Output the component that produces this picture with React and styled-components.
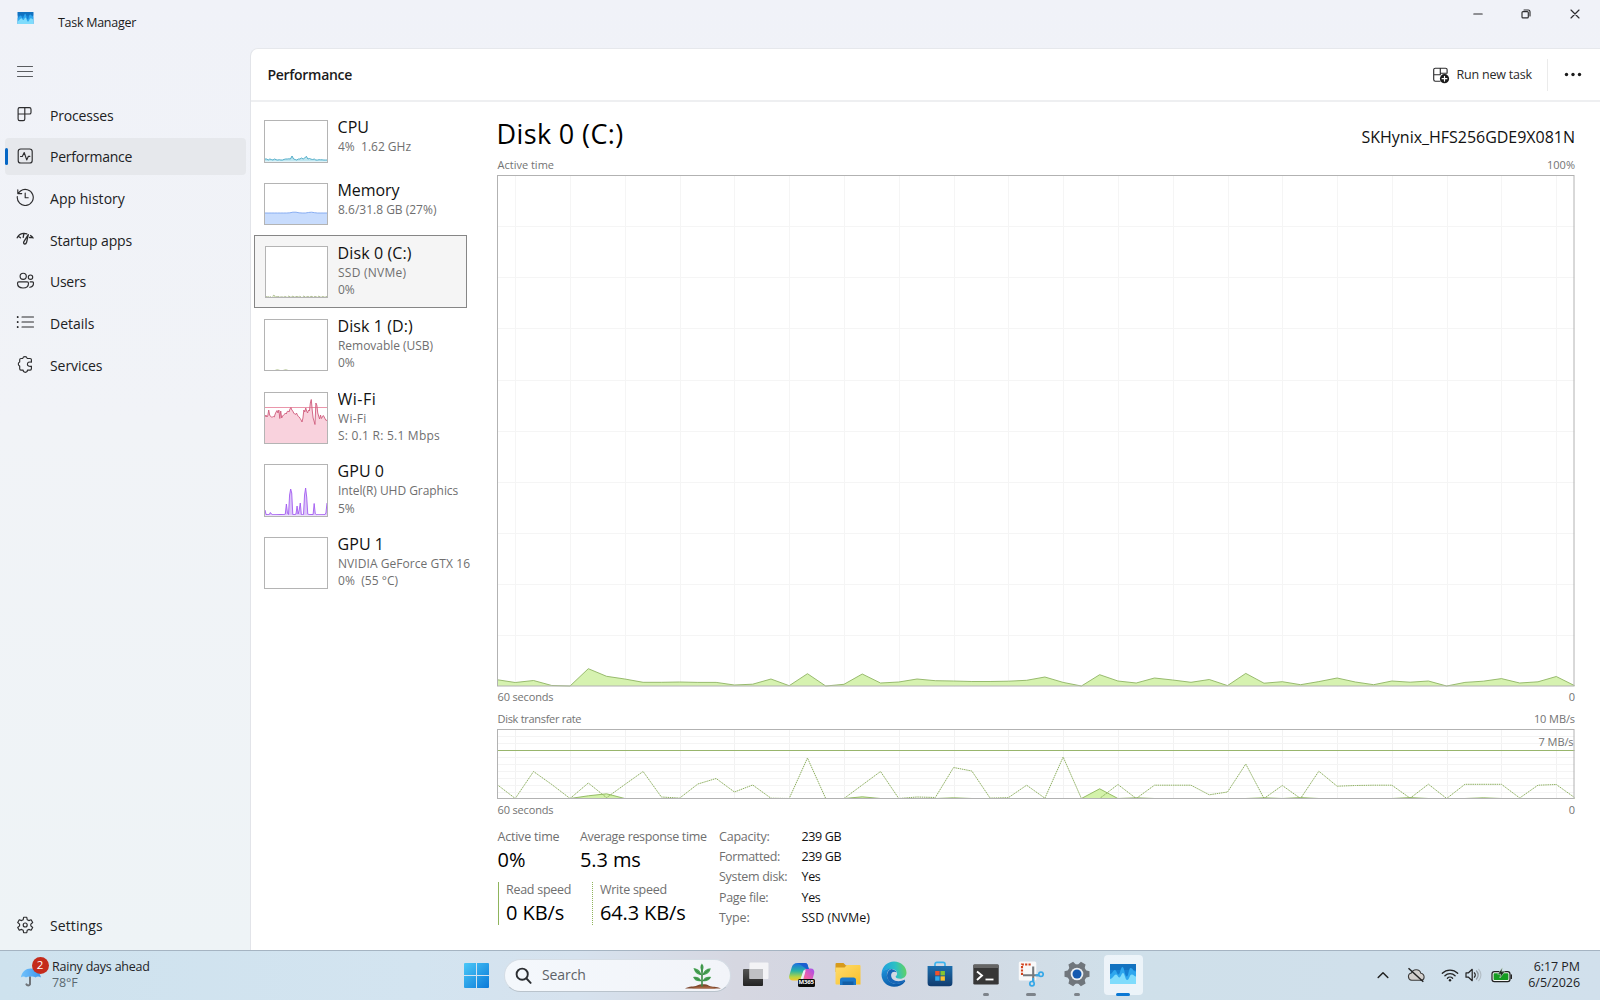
import React from "react";
import styled, { createGlobalStyle } from "styled-components";

const GlobalStyle = createGlobalStyle`
  * { box-sizing: border-box; }
  html, body { margin: 0; padding: 0; }
  body {
    font-family: "Open Sans", "Noto Sans", sans-serif;
    color: #1b1b1b;
    overflow: hidden;
  }
  svg { display: block; flex: none; }
`;

/* ---------- shell ---------- */
const Desktop = styled.div`
  width: 1600px;
  height: 1000px;
  display: grid;
  grid-template-rows: 950px 50px;
  overflow: hidden;
`;

const Window = styled.div`
  display: grid;
  grid-template-rows: 48px 902px;
  background: linear-gradient(180deg, #f0f2f8 0%, #f1f3f7 45%, #eef3f6 100%);
`;

const TitleBar = styled.header`
  display: flex;
  align-items: flex-start;
`;

const AppBadge = styled.div`
  padding: 12px 0 0 16.5px;
  width: 58px;
`;

const AppTitle = styled.div`
  padding-top: 13px;
  font-size: 12.5px;
  line-height: 20px;
  letter-spacing: -0.28px;
`;

const WindowButtons = styled.div`
  margin-left: auto;
  margin-right: 1px;
  display: flex;
`;

const WindowButton = styled.div`
  width: 48.5px;
  height: 28px;
  display: flex;
  align-items: center;
  justify-content: center;
`;

const Body = styled.div`
  display: grid;
  grid-template-columns: 250px 1350px;
`;

/* ---------- sidebar ---------- */
const Sidebar = styled.nav`
  display: flex;
  flex-direction: column;
  padding: 0 4px 2px 5px;
`;

const MenuButton = styled.div`
  height: 48px;
  padding: 0 0 0 11px;
  display: flex;
  align-items: center;
`;

const NavItem = styled.div`
  position: relative;
  height: 37.4px;
  margin-bottom: 4.25px;
  padding: 2px 0 0 11px;
  display: grid;
  grid-template-columns: 34px 1fr;
  align-items: center;
  border-radius: 4px;
  background: ${(p) => (p.$active ? "#e6e8ec" : "transparent")};
  font-size: 14px;
  line-height: 20px;
  letter-spacing: ${(p) => p.$ls || 0}px;
  color: #202123;
  svg { margin-top: -3px; }
`;

const ActiveMark = styled.span`
  position: absolute;
  left: -0.5px;
  top: 10.5px;
  width: 3px;
  height: 16.5px;
  border-radius: 2px;
  background: #0667c5;
`;

const NavSpacer = styled.div`
  flex: 1;
`;

/* ---------- content ---------- */
const Content = styled.main`
  background: #fff;
  border-left: 1px solid #e2e4e9;
  border-top: 1px solid #e6e8ec;
  border-top-left-radius: 8px;
  display: grid;
  grid-template-rows: 53px 1fr;
`;

const ContentHeader = styled.div`
  display: flex;
  align-items: center;
  border-bottom: 2px solid #eeeff1;
  padding-left: 16.5px;
`;

const PageTitle = styled.h1`
  margin: 0;
  padding-top: 1px;
  font-size: 14px;
  line-height: 20px;
  font-weight: 600;
  letter-spacing: -0.3px;
`;

const RunTask = styled.div`
  margin-left: auto;
  display: flex;
  align-items: center;
  gap: 7px;
  padding-right: 15px;
  font-size: 12.5px;
  line-height: 20px;
  letter-spacing: -0.2px;
  color: #2a2a2a;
`;

const HeaderDivider = styled.div`
  width: 1px;
  height: 32px;
  background: #ebebeb;
`;

const MoreButton = styled.div`
  width: 52px;
  padding-right: 2px;
  display: flex;
  justify-content: center;
`;

const Panes = styled.div`
  display: grid;
  grid-template-columns: 219px 1130px;
`;

/* ---------- resource list ---------- */
const ResourceList = styled.div`
  padding: 8px 0 0 3px;
`;

const Resource = styled.div`
  height: ${(p) => (p.$tall ? 72.6 : 62.8)}px;
  width: 217px;
  display: grid;
  grid-template-columns: 73.5px 1fr;
  padding: 10px 0 0 10px;
  ${(p) =>
    p.$selected &&
    `
    width: 213px;
    height: 73px;
    margin-top: -1px;
    margin-bottom: 1.4px;
    padding-top: 11px;
    background: #f5f5f5;
    box-shadow: inset 0 0 0 1px #868686;
  `}
`;

const Thumb = styled.div`
  width: ${(p) => (p.$selected ? 63 : 64)}px;
  height: ${(p) => (p.$tall ? 52.5 : 42.5)}px;
  margin-left: ${(p) => (p.$selected ? 0.5 : 0)}px;
  border: 1px solid #b4b4b4;
  background: #fff;
  overflow: hidden;
`;

const ResourceText = styled.div`
  min-width: 0;
  overflow: hidden;
  margin-top: -4px;
`;

const ResourceName = styled.div`
  font-size: 16px;
  line-height: 22px;
  letter-spacing: ${(p) => p.$ls || 0}px;
  color: #111;
  white-space: pre;
`;

const ResourceMeta = styled.div`
  font-size: 12px;
  line-height: 17.4px;
  padding-left: 0.5px;
  letter-spacing: ${(p) => p.$ls || 0}px;
  color: #6f6f6f;
  white-space: pre;
`;

/* ---------- details pane ---------- */
const Detail = styled.section`
  padding: 12px 25px 0 27.5px;
  display: flex;
  flex-direction: column;
`;

const SplitRow = styled.div`
  display: flex;
  justify-content: space-between;
  align-items: flex-end;
  height: ${(p) => p.$h}px;
`;

const DiskTitle = styled.h2`
  margin: 0;
  font-weight: 400;
  font-size: 27px;
  line-height: 40px;
  letter-spacing: 0.38px;
  margin-left: -1px;
  color: #000;
`;

const DiskModel = styled.div`
  font-size: 16px;
  line-height: 33px;
  letter-spacing: -0.02px;
  color: #111;
`;

const Caption = styled.div`
  font-size: 11px;
  line-height: 20px;
  letter-spacing: ${(p) => p.$ls || 0}px;
  color: #737373;
`;

const ChartLayer = styled.div`
  position: relative;
  margin-left: -0.5px;
  height: ${(p) => p.$h}px;
`;

const ScaleTag = styled.div`
  position: absolute;
  right: 1.5px;
  top: 3px;
  font-size: 11px;
  line-height: 20px;
  letter-spacing: -0.09px;
  color: #737373;
`;

const Stats = styled.div`
  display: grid;
  grid-template-columns: 221.5px 82.5px 1fr;
  padding-top: 7px;
`;

const StatGrid = styled.div`
  display: flex;
  flex-direction: column;
`;

const StatRow = styled.div`
  display: grid;
  grid-template-columns: ${(p) => p.$cols};
  height: ${(p) => p.$h}px;
`;

const Stat = styled.div`
  padding-left: ${(p) => (p.$bar ? 7.5 : 0)}px;
  border-left: ${(p) => (p.$bar ? `1.5px ${p.$bar} #8fb45c` : "none")};
  height: ${(p) => (p.$bar ? 43.5 : 46)}px;
`;

const StatLabel = styled.div`
  font-size: 12.5px;
  line-height: 20px;
  margin-top: ${(p) => p.$mt || 0}px;
  letter-spacing: ${(p) => p.$ls || 0}px;
  color: #6f6f6f;
  white-space: nowrap;
`;

const StatValue = styled.div`
  font-size: 20px;
  line-height: 26px;
  letter-spacing: ${(p) => p.$ls || 0}px;
  color: #000;
  white-space: nowrap;
`;

const InfoColumn = styled.div`
  display: flex;
  flex-direction: column;
`;

const InfoText = styled.div`
  font-size: 12.5px;
  line-height: 20.4px;
  letter-spacing: ${(p) => p.$ls || 0}px;
  color: ${(p) => (p.$dark ? "#111" : "#6f6f6f")};
  white-space: nowrap;
`;

/* ---------- taskbar ---------- */
const Taskbar = styled.footer`
  display: grid;
  grid-template-columns: 463px 692px 1fr;
  border-top: 1px solid #a5b4c2;
  background: linear-gradient(90deg, #cee2ee 0%, #d3e4f0 26%, #d6e2ee 36%, #d6d7e1 46%, #d3d6e2 52%, #d2dae4 60%, #cfe0ea 71%, #d1e0ec 100%);
`;

const WeatherWidget = styled.div`
  display: flex;
  padding: 5.5px 0 0 20px;
`;

const WeatherIcon = styled.div`
  position: relative;
  width: 32px;
  padding-top: 10px;
`;

const WeatherText = styled.div`
  padding-top: 2px;
`;

const AlertBadge = styled.span`
  position: absolute;
  left: 11.5px;
  top: 0;
  width: 17px;
  height: 17px;
  border-radius: 50%;
  background: #c42b1c;
  color: #fff;
  font-size: 11.5px;
  line-height: 16.5px;
  text-align: center;
`;

const TaskText = styled.div`
  font-size: 12.5px;
  line-height: 16.7px;
  letter-spacing: ${(p) => p.$ls || 0}px;
  color: ${(p) => p.$color || "#1f2427"};
  white-space: nowrap;
`;

const TaskIcons = styled.div`
  display: flex;
  align-items: flex-start;
`;

const StartButton = styled.div`
  width: 40.5px;
  padding: 12px 0 0 1px;
`;

const SearchBox = styled.div`
  width: 227.5px;
  height: 32.5px;
  margin-top: 8px;
  border-radius: 17px;
  background: linear-gradient(90deg, #f4f8fc, #f2f4f9);
  border: 1px solid #d5dde5;
  border-bottom-color: #b9c3cc;
  display: flex;
  align-items: center;
  padding: 0 8px 0 10px;
  font-size: 14px;
  line-height: 20px;
  letter-spacing: -0.1px;
  color: #5d6267;
  svg:first-child { margin-right: 10.5px; }
  svg:last-child { margin-left: auto; }
`;

const AppStrip = styled.div`
  display: flex;
  padding-left: 2px;
`;

const AppButton = styled.div`
  width: 39px;
  height: 40px;
  margin: 4px 3px 0 3.85px;
  border-radius: 4px;
  display: grid;
  grid-template-rows: 36px 4px;
  justify-items: center;
  align-items: center;
  padding-top: 1px;
  background: ${(p) => (p.$active ? "rgba(240,246,250,.88)" : "transparent")};
`;

const RunMark = styled.span`
  width: ${(p) => p.$w}px;
  height: 3px;
  border-radius: 2px;
  background: ${(p) => p.$color || "#7d838a"};
`;

const Tray = styled.div`
  display: flex;
  align-items: flex-start;
  justify-content: flex-end;
  padding: 5.5px 20px 0 0;
`;

const TrayIcon = styled.div`
  height: 37px;
  margin-right: ${(p) => p.$gap || 0}px;
  display: flex;
  align-items: center;
`;

const Clock = styled.div`
  text-align: right;
  width: 52px;
  padding-top: 2px;
`;

/* ---------- charts ---------- */
const STEPS = 59;
const ACTIVE = [6.3, 3.5, 5.5, 0.5, 0, 17.3, 9.7, 7, 3.7, 3.7, 4, 3.6, 3.6, 1, 1.8, 7, 0.3, 12.3, 0, 1.7, 12, 3, 4, 7, 5.3, 5, 4.5, 4.5, 4.8, 5.7, 9, 3.6, 0, 11.3, 5, 3, 8, 6, 3.7, 6.5, 0.4, 12.6, 2.8, 4.3, 1.3, 4.4, 8, 4, 1.3, 5, 3.8, 5, 0, 3.6, 4.8, 7.4, 3, 4.2, 9.5, 0.4];
const WRITE = [14, 0, 27, 14, 0, 15.5, 0.8, 14, 27, 1.5, 0.4, 14.5, 20, 6.5, 13.5, 0.3, 0, 40.5, 0, 0, 13.5, 27, 0, 1.5, 1, 31, 27.5, 0.4, 0.8, 13.3, 0.3, 41.5, 0, 0, 14, 0, 13.3, 13.3, 13.3, 3.7, 6.5, 34.5, 0, 13, 0, 27.3, 12.3, 13, 13.3, 13.3, 0.3, 14.3, 0, 14.2, 14.2, 14.2, 0.5, 13.3, 14, 1];
const READ = Array(60).fill(0);
Object.entries({ 5: 2.7, 6: 4.7, 20: 1.7, 25: 0.7, 33: 9.7, 35: 0.7, 42: 0.7, 44: 0.9, 50: 0.9, 54: 0.7 }).forEach(([k, v]) => { READ[k] = v; });

const trace = (data, w, base) =>
  data.map((v, i) => `${((i * w) / (data.length - 1)).toFixed(2)},${(base - v).toFixed(2)}`).join(" ");

function Grid({ w, h, rows, color, hColor }) {
  const lines = [];
  for (let i = 1; i <= STEPS; i += 3) {
    const x = Math.round((i * w) / STEPS) + 0.5;
    lines.push(<line key={"v" + i} x1={x} x2={x} y1="1" y2={h} stroke={color} />);
  }
  for (let r = 1; r < rows; r++) {
    const y = Math.round((r * h) / rows) + 0.5;
    lines.push(<line key={"h" + r} x1="1" x2={w} y1={y} y2={y} stroke={hColor || color} />);
  }
  return <g>{lines}</g>;
}

function ActiveChart() {
  const w = 1077.5, h = 511.5, b = h - 0.5;
  return (
    <svg width={w} height={h + 0.5}>
      <Grid w={w} h={h} rows={10} color="#f5f5f5" />
      <polygon points={`0,${b} ${trace(ACTIVE, w, b)} ${w},${b}`} fill="#d6f2b0" />
      <polyline points={trace(ACTIVE, w, b)} fill="none" stroke="#8fb362" strokeWidth="0.9" />
      <rect x="0.5" y="0.5" width={w - 1} height={h - 1} fill="none" stroke="#b2b2b2" />
    </svg>
  );
}

function TransferChart() {
  const w = 1077.5, h = 70, b = h - 0.5;
  return (
    <svg width={w} height={h}>
      <Grid w={w} h={h} rows={10} color="#f2f2f2" hColor="#f4f4f4" />
      <line x1="0" x2={w} y1="21.5" y2="21.5" stroke="#98b56c" />
      <polygon points={`0,${b} ${trace(READ, w, b)} ${w},${b}`} fill="#d3f2aa" />
      <polyline points={trace(READ, w, b)} fill="none" stroke="#8db65c" strokeWidth="0.9" />
      <polyline points={trace(WRITE, w, b)} fill="none" stroke="#8fb062" strokeWidth="1" strokeDasharray="1.5 0.7" />
      <rect x="0.5" y="0.5" width={w - 1} height={h - 1} fill="none" stroke="#b2b2b2" />
    </svg>
  );
}

const CPU = [2, 2, 1, 2, 1.5, 1, 2, 1.3, 1, 1.3, 1, 1, 1.6, 2, 2, 2.2, 2, 5, 2, 1.5, 1, 2, 2, 3, 2, 3, 4.7, 2, 2.5, 1.8, 1.5, 2, 1, 1, 1.3, 1.2, 1.2, 1, 1, 1];
const MEM = [11, 11, 11, 11, 11, 11, 11, 11, 11.2, 11.8, 11.8, 11.2, 11, 11, 11.5, 11.8, 11.3, 11, 11, 11, 11];
const D0 = [0.3, 0, 0.5, -0.5, 1.7, 0.7, 0.3, 0.3, 0.1, 0, 0.5, -0.2, 0.8, 0, 0.7, 0.1, 0.5, 0.2, 0.7, -0.5, 0.8, 0, 0.5, 0.1, 0.7, 0, 0.5, 0, 0.7, 0, 0.5, 0, 0.5, 0];
const D1 = [-1, -1, -1, 0.4, -1, 0.4, -1, -1, -1, -1, -1, -1, -1, -1, -1, -1];
const WIFI = [26, 28, 26, 27, 33, 28, 26.5, 26, 26, 26.5, 26, 29, 31, 32.5, 30, 33, 24.5, 32, 25, 27, 28, 28.5, 30, 29, 31.5, 32, 31, 34, 35.5, 33, 32, 30, 29, 28.5, 30, 28, 26.5, 26, 24.5, 23, 21, 25, 33, 31, 35, 32, 30, 33, 32, 40, 43.5, 33, 25, 22, 18.5, 40, 38, 30, 27, 24, 28, 24.5, 26, 27.5, 26, 24, 22.5, 23];
const GPU = [5, 0.5, 0.5, 0.5, 0.5, 2.5, 1, 0.5, 0.5, 0.5, 0.5, 0.5, 0.5, 0.5, 0.5, 0.5, 0.5, 0.5, 0.5, 1, 11, 2, 0.5, 20, 26, 22, 0.5, 0.5, 0.5, 1, 9, 1, 5, 12, 0.5, 0.5, 0.5, 20, 27, 18, 1, 0.5, 0.5, 0.5, 0.5, 0.5, 11.5, 1.5, 0.5, 0.5, 0.5, 0.5, 0.5, 0.5, 0.5, 0.5, 0.5, 2, 12];

function Spark({ data, h, stroke, fill, cap, dash }) {
  if (!data) return null;
  return (
    <svg width="62" height={h}>
      <polygon points={`0,${h} ${trace(data, 62, h - 0.5)} 62,${h}`} fill={fill} />
      {cap && <line x1="0" x2="62" y1={cap} y2={cap} stroke="#e88aa2" strokeWidth="0.9" />}
      <polyline points={trace(data, 62, h - 0.5)} fill="none" stroke={stroke} strokeWidth="0.9" strokeDasharray={dash} />
    </svg>
  );
}

const RESOURCES = [
  { name: "CPU", meta: ["4%  1.62 GHz"], ls: 0.05, mls: [0], data: CPU, stroke: "#45a6c4", fill: "#bfe6f0" },
  { name: "Memory", meta: ["8.6/31.8 GB (27%)"], ls: -0.06, mls: [0], data: MEM, stroke: "#7ea6f0", fill: "#c8dcfd" },
  { name: "Disk 0 (C:)", meta: ["SSD (NVMe)", "0%"], ls: 0.12, mls: [0.25, 0], tall: true, selected: true, data: D0, stroke: "#a3b183", fill: "#e4f2cc", dash: "3 1" },
  { name: "Disk 1 (D:)", meta: ["Removable (USB)", "0%"], ls: 0.08, mls: [-0.04, 0], tall: true, data: D1, stroke: "#b9c99a", fill: "none" },
  { name: "Wi-Fi", meta: ["Wi-Fi", "S: 0.1 R: 5.1 Mbps"], ls: 0.5, mls: [0.3, 0.24], tall: true, data: WIFI, stroke: "#cf5b7c", fill: "#f9d2dd", cap: 14.5 },
  { name: "GPU 0", meta: ["Intel(R) UHD Graphics", "5%"], ls: 0.07, mls: [-0.05, 0], tall: true, data: GPU, stroke: "#a35bf0", fill: "#dcc6f8" },
  { name: "GPU 1", meta: ["NVIDIA GeForce GTX 16", "0%  (55 °C)"], ls: 0.07, mls: [0.06, 0.05], tall: true },
];

/* ---------- icons ---------- */
const Line = ({ children, w = 18, h = 18, vb, sw = 1.15, color = "#2c2c2e" }) => (
  <svg width={w} height={h} viewBox={vb || `0 0 ${w} ${h}`} fill="none" stroke={color} strokeWidth={sw} strokeLinecap="round" strokeLinejoin="round">
    {children}
  </svg>
);

const BurgerIcon = () => <Line color="#5a5c60"><path d="M1.500 3.500h15M1.500 8.500h15M1.500 13.500h15" /></Line>;
const ProcessesIcon = () => (
  <Line><path d="M3.600 2.600h9.800a1.600 1.600 0 0 1 1.600 1.600V7.400a1.600 1.600 0 0 1-1.600 1.600H8.800v5a1.600 1.600 0 0 1-1.600 1.600H3.700A1.600 1.600 0 0 1 2.100 14V4.200a1.600 1.600 0 0 1 1.500-1.600zM8.800 2.600V9H2.100" /></Line>
);
const PerformanceIcon = () => (
  <Line><rect x="2.200" y="2" width="14" height="14" rx="2.600" /><path d="M4.500 9.500h1.800l1.900-4 2.500 7.400 1.700-3.600h1.500" /></Line>
);
const HistoryIcon = () => (
  <Line><path d="M1.300 8.500A8 8 0 1 0 4.500 3L2 5.400M1.800 1.800v3.800h3.900M9.200 5v4.700h3" /></Line>
);
const StartupIcon = () => (
  <Line sw={1.3}><path d="M1.200 7.800C2.200 5.400 4.600 3.700 7.300 3.400c1.200-.1 2.400 0 3.500.4M3 6.800l1.500 1M14.600 5.500c1.100.7 1.900 1.400 2.500 2.500M13.600 7.500l2.700-.2M12.300 4.600 7.900 11.600c-.6 1-.3 2.300.7 2.400 1.100.2 1.700-.8 2-1.700zM7.800 4.200l-.6 3.200" /></Line>
);
const UsersIcon = () => (
  <Line><circle cx="7.200" cy="4.300" r="3.100" /><circle cx="14.500" cy="5.200" r="2.200" /><path d="M2.800 9.900h8.400a1.300 1.300 0 0 1 1.300 1.300c0 3-2.300 4.800-5.500 4.800s-5.500-1.800-5.500-4.800a1.300 1.300 0 0 1 1.300-1.300zM14.200 9.900h2.100a1.200 1.200 0 0 1 1.200 1.200c0 2.500-1.300 4-3.700 4.200" /></Line>
);
const DetailsIcon = () => (
  <Line><path d="M6 4h11.500M6 9h11.500M6 14h11.500" /><path d="M1.700 3.800v.4M1.700 8.800v.4M1.700 13.800v.4" strokeWidth="1.800" /></Line>
);
const ServicesIcon = () => (
  <Line><path d="M6.700 3.500a2.300 2.300 0 0 1 4.500 0h2.900a1.300 1.300 0 0 1 1.300 1.300v2.400c-2.300-.7-4 .4-4 2s1.700 2.700 4 2v2.600a1.300 1.300 0 0 1-1.300 1.300h-2.600a2.200 2.200 0 0 1-4.400 0H5a1.300 1.300 0 0 1-1.300-1.300v-2.700a2.200 2.200 0 0 1 0-4.100V4.800A1.300 1.300 0 0 1 5 3.500z" /></Line>
);
const SettingsIcon = () => {
  const pts = [];
  const n = 6;
  for (let i = 0; i < n; i++) {
    const a = (i * 2 * Math.PI) / n;
    [[-0.36, 5.7], [-0.2, 7.9], [0.2, 7.9], [0.36, 5.7]].forEach(([o, r]) =>
      pts.push(`${(9.2 + r * Math.sin(a + o)).toFixed(2)},${(9 - r * Math.cos(a + o)).toFixed(2)}`)
    );
  }
  return <Line><polygon points={pts.join(" ")} /><circle cx="9.200" cy="9" r="2" /></Line>;
};

const MonitorLogo = ({ w, h }) => (
  <svg width={w} height={h} viewBox="0 0 26 20">
    <rect width="26" height="20" rx="1" fill="#1680d3" />
    <rect width="26" height="6" fill="#1272c0" />
    <path d="M0 10c2.500 0 3-4 4.800-4 2 0 2 4.500 3.700 4.500S10.600 3 12.500 3s2.200 9.500 4.200 9.500S18.600 4 20.700 4s2.300 3.500 5.300 3.500V20H0z" fill="#2ea7ee" />
    <path d="M0 15c3 0 3.800-4.500 6-4.500 1.700 0 1.800 3 3.400 3s2-4.500 3.600-4.500c1.700 0 2.200 7 4.200 7s2.400-5.500 4.500-5.500 2.600 2 4.300 2V20H0z" fill="#7fdcfc" />
  </svg>
);

const RunIcon = () => (
  <Line w={18} h={18}>
    <path d="M8 15.200H3.300A1.600 1.600 0 0 1 1.700 13.600V3.800a1.600 1.600 0 0 1 1.600-1.600h10.200a1.600 1.600 0 0 1 1.600 1.600V7M8.300 2.200V8.500M1.700 8.700h6.600M15 7.200H8.500" />
    <circle cx="12.500" cy="12.700" r="4.600" fill="#1b1b1b" stroke="none" />
    <path d="M12.500 10.300v4.800M10.100 12.700h4.800" stroke="#fff" strokeWidth="1.200" />
  </Line>
);

const Umbrella = () => (
  <svg width="24" height="24" viewBox="0 0 24 24">
    <defs><linearGradient id="um" x1="0" x2="1"><stop offset="0" stopColor="#72c2fb" /><stop offset="1" stopColor="#3d97ee" /></linearGradient></defs>
    <path d="M10 10v7.300a2 2 0 0 1-3.600 0" fill="none" stroke="#70757a" strokeWidth="2" strokeLinecap="round" />
    <path d="M.8 10.500C2 4.500 6 1.500 10.700 1.500S19.800 4.500 21 10.500c-1.900-1.200-4-1.200-5.400 0-1.700-1.300-8.100-1.300-9.600 0-1.300-1.200-3.600-1.200-5.200 0z" fill="url(#um)" />
  </svg>
);

const StartLogo = () => (
  <svg width="25" height="25" viewBox="0 0 25 25">
    <defs><linearGradient id="st" x1="0" y1="0" x2="1" y2="1" gradientUnits="objectBoundingBox"><stop offset="0" stopColor="#4bc8f8" /><stop offset="1" stopColor="#0a79d8" /></linearGradient></defs>
    <path d="M1 0h11v12H0V1a1 1 0 0 1 1-1zM13 0h11a1 1 0 0 1 1 1v11H13zM0 13h12v12H1a1 1 0 0 1-1-1zM13 13h12v11a1 1 0 0 1-1 1H13z" fill="url(#st)" />
  </svg>
);

const SearchIcon = () => (
  <svg width="17" height="17" viewBox="0 0 17 17" fill="none" stroke="#2b2e31" strokeWidth="1.900" strokeLinecap="round"><circle cx="7.200" cy="7.200" r="5.600" /><path d="M11.500 11.500 15.600 15.900" /></svg>
);

const Plant = () => (
  <svg width="38" height="28" viewBox="0 0 38 28">
    <path d="M1 27.500c4-2.600 9-1.600 12-3 3-1.400 9-1.800 12 .2 3.500 1.600 7 .4 12 2.800z" fill="#80492f" />
    <path d="M8 27.200c5-2.200 18-2.400 24 .2z" fill="#a5643f" />
    <path d="M18 25.500V7" stroke="#3c8a46" strokeWidth="1.600" />
    <path d="M17.800 2.500c2.600 2.700 2 5.500.2 8-2-2.500-2.200-5.300-.2-8zM17.500 14C13.500 14 10.500 11.500 9.500 7c4 .5 7.200 2.800 8 7zM18.500 14c.8-3.800 4-6.600 8.200-6.800-.6 4.300-4 6.800-8.200 6.800zM17.500 20c-3 .8-6.500.4-8.500-4 3.600-1 7 .2 8.500 4zM18.500 20c1.400-3.800 5-5 8.700-4-2 4-5.500 5-8.700 4z" fill="#4ba557" />
    <path d="M18 11 17.800 4M17.500 14 11 8.500M18.500 14 25 8.700M17.500 20 10.500 16.700M18.500 20 26 16.700" stroke="#2f7d3d" strokeWidth=".7" />
  </svg>
);

const TaskViewIcon = () => (
  <svg width="26" height="25" viewBox="0 0 26 25">
    <defs><linearGradient id="tv" x1="0" y1="0" x2="0" y2="1"><stop offset="0" stopColor="#555" /><stop offset="1" stopColor="#232323" /></linearGradient></defs>
    <rect x="0" y="7" width="20" height="17" rx="1" fill="url(#tv)" />
    <rect x="6.500" y="0.500" width="19" height="16.500" rx="1" fill="#f5f5f7" fillOpacity=".93" />
    <rect x="6.500" y="7" width="13.500" height="10" fill="#bfc0c4" />
  </svg>
);

const CopilotText = styled.span`
  position: absolute;
  left: 8.5px;
  top: 17.5px;
  width: 17px;
  height: 7.5px;
  border-radius: 1.5px;
  background: #0c0c0c;
  color: #fff;
  font-size: 6px;
  font-weight: 700;
  line-height: 7.5px;
  text-align: center;
  letter-spacing: -0.1px;
`;
const CopilotWrap = styled.span`
  position: relative;
  width: 26px;
  height: 25px;
`;
const CopilotIcon = () => (
  <CopilotWrap>
    <svg width="26" height="25" viewBox="0 0 26 25">
      <defs>
        <linearGradient id="c1" x1="0" y1="0" x2="0" y2="1"><stop offset="0" stopColor="#1c6fe0" /><stop offset=".45" stopColor="#27b3a6" /><stop offset=".8" stopColor="#b9d441" /><stop offset="1" stopColor="#f5c52c" /></linearGradient>
        <linearGradient id="c2" x1="1" y1="0" x2="0" y2="1"><stop offset="0" stopColor="#a24df0" /><stop offset=".5" stopColor="#ee5fa8" /><stop offset="1" stopColor="#f98b4c" /></linearGradient>
      </defs>
      <path d="M17.500 6.500h4.200c2.600 0 4 2 3.500 4.500l-1.900 7c-.8 3-2.400 5-5.500 5H9.500c3 0 4-2 4.800-5l1.500-7c.4-2 .2-4.500 1.700-4.500z" fill="url(#c2)" />
      <path d="M8.500 1h7.300c1.600 0 2.500.8 3 2.400l1 3.600h-2.300c-2 0-3 1.300-3.600 3.400l-1.500 5c-.8 2.400-2 3.200-4 3.200H4c-3 0-4.500-2-3.700-5l2.400-8C3.600 2.600 5.300 1 8.500 1z" fill="url(#c1)" />
      <path d="M8.500 1h7.300c1.600 0 2.500.8 3 2.400l1 3.600h-2.300L12 3z" fill="#1a5fd0" />
      <path d="M14.600 8.500h2.200l-3.300 9.500h-2.300z" fill="#eef0f8" fillOpacity=".85" />
    </svg>
    <CopilotText>M365</CopilotText>
  </CopilotWrap>
);

const FolderIcon = () => (
  <svg width="26" height="24" viewBox="0 0 26 24">
    <defs><linearGradient id="fo" x1="0" y1="0" x2="1" y2="1"><stop offset="0" stopColor="#ffdc6b" /><stop offset="1" stopColor="#f8c02c" /></linearGradient></defs>
    <path d="M1.500 1h7l2.500 2.500h5V10H.5V2a1 1 0 0 1 1-1z" fill="#d79a1b" />
    <path d="M9.500 5.500 12 3h12.500a1 1 0 0 1 1 1v18.500H1.500a1 1 0 0 1-1-1v-16z" fill="url(#fo)" />
    <path d="M5 23v-5a2.500 2.500 0 0 1 2.500-2.500h11A2.500 2.500 0 0 1 21 18v5z" fill="#1b78c9" />
    <path d="M7.500 19.500h11V23h-11z" fill="#125ea5" />
  </svg>
);

const EdgeIcon = () => (
  <svg width="26" height="26" viewBox="0 0 26 26">
    <defs>
      <linearGradient id="e1" x1="0" y1=".3" x2="1" y2=".2"><stop offset="0" stopColor="#1f9ee0" /><stop offset=".55" stopColor="#2cc0c4" /><stop offset="1" stopColor="#66d35a" /></linearGradient>
      <linearGradient id="e2" x1="0" y1="0" x2=".5" y2="1"><stop offset="0" stopColor="#1e94dc" /><stop offset="1" stopColor="#0b5aa8" /></linearGradient>
    </defs>
    <path d="M.6 12C1.200 5.500 6.400.5 13 .5c7.200 0 12.500 5.300 12.500 11.200 0 3.700-3 6-6.300 6-2.500 0-4.600-.7-4.600-1.900 0-.8 1.500-1.200 1.500-3.300 0-2.600-2.800-4.500-6.100-4.500C6 8 2.500 9.500.6 12z" fill="url(#e1)" />
    <path d="M.5 13.500C.6 10 5 7.800 9.600 7.800c-2.800 1.700-3.900 4-3.700 6.700.3 4.800 4.600 8.500 9.600 8.300 3.200-.1 5.800-1.300 7.600-2.800 1-.6 1.400 0 .8.800-2.300 3.200-6.400 5-10.900 5C6 25.800.5 20.500.5 13.500z" fill="url(#e2)" />
    <path d="M10.200 13.300c-.6 3.800 2.300 7 7.300 7 2.400 0 4.600-.9 5.900-1.500.6-.2.8.4.3 1-2 2.200-5.200 3.500-8.700 3.300-5.100-.3-9-4-9-8.600 0-3 1.700-5.500 4.200-6.600 2.600.2 4.900 1.700 5.500 3.700-1.300-1.400-4.800-1.500-5.500 1.700z" fill="#1667b8" />
  </svg>
);

const StoreIcon = () => (
  <svg width="26" height="26" viewBox="0 0 26 26">
    <defs><linearGradient id="ms" x1="0" y1="0" x2="0" y2="1"><stop offset="0" stopColor="#1d6fae" /><stop offset="1" stopColor="#113c6f" /></linearGradient></defs>
    <path d="M8 6V3.200A1.900 1.900 0 0 1 9.900 1.300h6.200A1.900 1.900 0 0 1 18 3.200V6" fill="none" stroke="#3cb4ee" strokeWidth="1.700" />
    <path d="M.6 5h24.800v17A3.200 3.200 0 0 1 22.200 25.200H3.800A3.200 3.200 0 0 1 .6 22z" fill="url(#ms)" />
    <path d="M8.200 10h4.400v4.400H8.200z" fill="#f0522b" /><path d="M13.500 10h4.400v4.400h-4.400z" fill="#85c431" /><path d="M8.200 15.300h4.400v4.400H8.200z" fill="#2fabf0" /><path d="M13.500 15.300h4.400v4.400h-4.400z" fill="#fcc12c" />
  </svg>
);

const TerminalIcon = () => (
  <svg width="26" height="21" viewBox="0 0 26 21">
    <rect x=".3" y=".5" width="25.400" height="20" rx="1.300" fill="#373737" />
    <path d="M.3 4V1.800A1.300 1.300 0 0 1 1.600.5h22.800a1.300 1.300 0 0 1 1.300 1.300V4z" fill="#666" />
    <path d="M4 7.500 9 11.500 4 16" fill="none" stroke="#fff" strokeWidth="1.900" /><path d="M12.500 15.500h8" stroke="#fff" strokeWidth="1.800" />
  </svg>
);

const SnipIcon = () => (
  <svg width="26" height="26" viewBox="0 0 26 26">
    <rect x=".8" y=".5" width="17.500" height="19" rx="1.500" fill="#f8f8f9" />
    <path d="M4 14V3.500h9.800" fill="none" stroke="#d2411c" strokeWidth="2.100" strokeDasharray="2.200 1.200" />
    <path d="M15.200 5.500v15M5 14.300h15.500" stroke="#75797e" strokeWidth="2.100" />
    <circle cx="23" cy="13.300" r="2.200" fill="none" stroke="#35a8e8" strokeWidth="1.700" /><circle cx="14" cy="22.700" r="2.200" fill="none" stroke="#35a8e8" strokeWidth="1.700" />
    <path d="M17.500 14.300H21M15.200 17v3.500" stroke="#35a8e8" strokeWidth="1.900" />
  </svg>
);

const GearIcon = () => (
  <svg width="26" height="26" viewBox="0 0 26 26">
    <g fill="#70767c">
      <circle cx="13" cy="13" r="9.800" />
      {[30, 90, 150].map((a) => (<path key={a} transform={`rotate(${a} 13 13)`} d="M10.300.5h5.400l1.300 4.800h-8zM10.300 25.500h5.400l1.300-4.800h-8z" />))}
    </g>
    <circle cx="13" cy="13" r="6.300" fill="#e9eef2" />
    <circle cx="13" cy="13" r="4.500" fill="#1359b0" />
  </svg>
);

const CloudOff = () => (
  <svg width="18" height="16" viewBox="0 0 18 16" fill="none" stroke="#3b3b3b" strokeWidth="1.100">
    <path d="M4.700 13.300h8.600a3.500 3.500 0 0 0 .6-7A5 5 0 0 0 4.400 6a3.700 3.700 0 0 0 .3 7.300z" fill="#d3cfcc" />
    <path d="M1.500 1.300 16.300 14.800" strokeWidth="1.500" stroke="#222" />
  </svg>
);
const WifiIcon = () => (
  <svg width="18" height="14" viewBox="0 0 18 14" fill="none" stroke="#222" strokeWidth="1.300" strokeLinecap="round">
    <path d="M1.300 5.300a10.900 10.900 0 0 1 15.400 0M3.900 7.800a7.200 7.200 0 0 1 10.200 0M6.400 10.200a3.700 3.700 0 0 1 5.200 0" /><circle cx="9" cy="12.300" r="1.200" fill="#222" stroke="none" />
  </svg>
);
const SoundIcon = () => (
  <svg width="18" height="14" viewBox="0 0 18 14" fill="none" stroke="#222" strokeWidth="1.200" strokeLinecap="round" strokeLinejoin="round">
    <path d="M1 4.800h2.500L7.200 1.300v11.400L3.500 9.200H1z" /><path d="M9.300 4.800a3 3 0 0 1 0 4.400" /><path d="M11.500 3a5.700 5.700 0 0 1 0 8" stroke="#8b949b" /><path d="M13.700 1.300a8.500 8.500 0 0 1 0 11.400" stroke="#b3bec6" />
  </svg>
);
const BatteryIcon = () => (
  <svg width="22" height="17" viewBox="0 0 22 17">
    <rect x="1" y="4.700" width="18" height="10" rx="2.400" fill="#f4f8f4" stroke="#222" strokeWidth="1.200" /><rect x="2.600" y="6.300" width="14.800" height="6.800" rx=".8" fill="#159c20" />
    <path d="M20.300 8v3.400" stroke="#222" strokeWidth="1.400" strokeLinecap="round" /><path d="M11.300.7 6.700 7.200h3L8.900 11l4.900-6.300h-3z" fill="#1d2a1d" stroke="#cfe6d6" strokeWidth=".6" />
  </svg>
);

/* ---------- page ---------- */
const NAV = [
  ["Processes", ProcessesIcon, -0.18],
  ["Performance", PerformanceIcon, -0.24],
  ["App history", HistoryIcon, 0.03],
  ["Startup apps", StartupIcon, -0.12],
  ["Users", UsersIcon, -0.26],
  ["Details", DetailsIcon, 0],
  ["Services", ServicesIcon, -0.08],
];

const APPS = [
  [TaskViewIcon], [CopilotIcon], [FolderIcon], [EdgeIcon], [StoreIcon],
  [TerminalIcon, 6], [SnipIcon, 10], [GearIcon, 6],
];

const INFO = [
  ["Capacity:", "239 GB", -0.22, -0.34],
  ["Formatted:", "239 GB", -0.36, -0.34],
  ["System disk:", "Yes", -0.31, -0.35],
  ["Page file:", "Yes", -0.3, -0.35],
  ["Type:", "SSD (NVMe)", -0.1, 0],
];

export default function App() {
  return (
    <Desktop>
      <GlobalStyle />
      <Window>
        <TitleBar>
          <AppBadge><MonitorLogo w={17} h={12} /></AppBadge>
          <AppTitle>Task Manager</AppTitle>
          <WindowButtons>
            <WindowButton><Line w={10} h={10}><path d="M.8 5h8.400" /></Line></WindowButton>
            <WindowButton><Line w={10} h={10}><rect x="1" y="2.600" width="6.300" height="6.300" rx="1" /><path d="M3 1h4.200A1.800 1.800 0 0 1 9 2.800V7" /></Line></WindowButton>
            <WindowButton><Line w={10} h={10}><path d="M1 1l8 8M9 1 1 9" /></Line></WindowButton>
          </WindowButtons>
        </TitleBar>
        <Body>
          <Sidebar>
            <MenuButton><BurgerIcon /></MenuButton>
            {NAV.map(([name, Icon, ls], i) => (
              <NavItem key={name} $active={i === 1} $ls={ls}>
                {i === 1 && <ActiveMark />}
                <Icon />
                {name}
              </NavItem>
            ))}
            <NavSpacer />
            <NavItem $ls={0.1}><SettingsIcon />Settings</NavItem>
          </Sidebar>
          <Content>
            <ContentHeader>
              <PageTitle>Performance</PageTitle>
              <RunTask><RunIcon />Run new task</RunTask>
              <HeaderDivider />
              <MoreButton>
                <svg width="18" height="5"><g fill="#1b1b1b"><circle cx="2.500" cy="2.500" r="1.700" /><circle cx="9" cy="2.500" r="1.700" /><circle cx="15.500" cy="2.500" r="1.700" /></g></svg>
              </MoreButton>
            </ContentHeader>
            <Panes>
              <ResourceList>
                {RESOURCES.map((r) => (
                  <Resource key={r.name} $tall={r.tall} $selected={r.selected}>
                    <Thumb $tall={r.tall} $selected={r.selected}>
                      <Spark data={r.data} h={r.tall ? 50.5 : 40.5} stroke={r.stroke} fill={r.fill} cap={r.cap} dash={r.dash} />
                    </Thumb>
                    <ResourceText>
                      <ResourceName $ls={r.ls}>{r.name}</ResourceName>
                      {r.meta.map((m, i) => <ResourceMeta key={i} $ls={r.mls[i]}>{m}</ResourceMeta>)}
                    </ResourceText>
                  </Resource>
                ))}
              </ResourceList>
              <Detail>
                <SplitRow $h={40}>
                  <DiskTitle>Disk 0 (C:)</DiskTitle>
                  <DiskModel>SKHynix_HFS256GDE9X081N</DiskModel>
                </SplitRow>
                <SplitRow $h={21}><Caption>Active time</Caption><Caption>100%</Caption></SplitRow>
                <ChartLayer $h={511.5}><ActiveChart /></ChartLayer>
                <SplitRow $h={20.5}><Caption $ls={-0.15}>60 seconds</Caption><Caption>0</Caption></SplitRow>
                <SplitRow $h={21.5}><Caption $ls={-0.3}>Disk transfer rate</Caption><Caption $ls={-0.09}>10 MB/s</Caption></SplitRow>
                <ChartLayer $h={70}><TransferChart /><ScaleTag>7 MB/s</ScaleTag></ChartLayer>
                <SplitRow $h={21}><Caption $ls={-0.15}>60 seconds</Caption><Caption>0</Caption></SplitRow>
                <Stats>
                  <StatGrid>
                    <StatRow $cols="82.5px 1fr" $h={55}>
                      <Stat><StatLabel $ls={-0.22}>Active time</StatLabel><StatValue>0%</StatValue></Stat>
                      <Stat><StatLabel $ls={-0.33}>Average response time</StatLabel><StatValue $ls={-0.1}>5.3 ms</StatValue></Stat>
                    </StatRow>
                    <StatRow $cols="94px 1fr" $h={50}>
                      <Stat $bar="solid"><StatLabel $mt={-2} $ls={-0.27}>Read speed</StatLabel><StatValue $ls={-0.08}>0 KB/s</StatValue></Stat>
                      <Stat $bar="dotted"><StatLabel $mt={-2} $ls={-0.27}>Write speed</StatLabel><StatValue $ls={-0.14}>64.3 KB/s</StatValue></Stat>
                    </StatRow>
                  </StatGrid>
                  <InfoColumn>{INFO.map(([k, , ls]) => <InfoText key={k} $ls={ls}>{k}</InfoText>)}</InfoColumn>
                  <InfoColumn>{INFO.map(([k, v, , ls]) => <InfoText key={k} $dark $ls={ls}>{v}</InfoText>)}</InfoColumn>
                </Stats>
              </Detail>
            </Panes>
          </Content>
        </Body>
      </Window>
      <Taskbar>
        <WeatherWidget>
          <WeatherIcon><Umbrella /><AlertBadge>2</AlertBadge></WeatherIcon>
          <WeatherText>
            <TaskText $ls={-0.22}>Rainy days ahead</TaskText>
            <TaskText $ls={-0.15} $color="#5b6970">78°F</TaskText>
          </WeatherText>
        </WeatherWidget>
        <TaskIcons>
          <StartButton><StartLogo /></StartButton>
          <SearchBox><SearchIcon />Search<Plant /></SearchBox>
          <AppStrip>
            {APPS.map(([Icon, mark], i) => (
              <AppButton key={i}><Icon />{mark && <RunMark $w={mark} />}</AppButton>
            ))}
            <AppButton $active><MonitorLogo w={26} h={20} /><RunMark $w={14} $color="#0a78d4" /></AppButton>
          </AppStrip>
        </TaskIcons>
        <Tray>
          <TrayIcon $gap={18}><Line w={12} h={8} sw={1.5} color="#222"><path d="M1.200 6.500 6 1.700l4.800 4.800" /></Line></TrayIcon>
          <TrayIcon $gap={16}><CloudOff /></TrayIcon>
          <TrayIcon $gap={6}><WifiIcon /></TrayIcon>
          <TrayIcon $gap={8}><SoundIcon /></TrayIcon>
          <TrayIcon $gap={15}><BatteryIcon /></TrayIcon>
          <Clock>
            <TaskText $ls={-0.07}>6:17 PM</TaskText>
            <TaskText $ls={-0.04}>6/5/2026</TaskText>
          </Clock>
        </Tray>
      </Taskbar>
    </Desktop>
  );
}
